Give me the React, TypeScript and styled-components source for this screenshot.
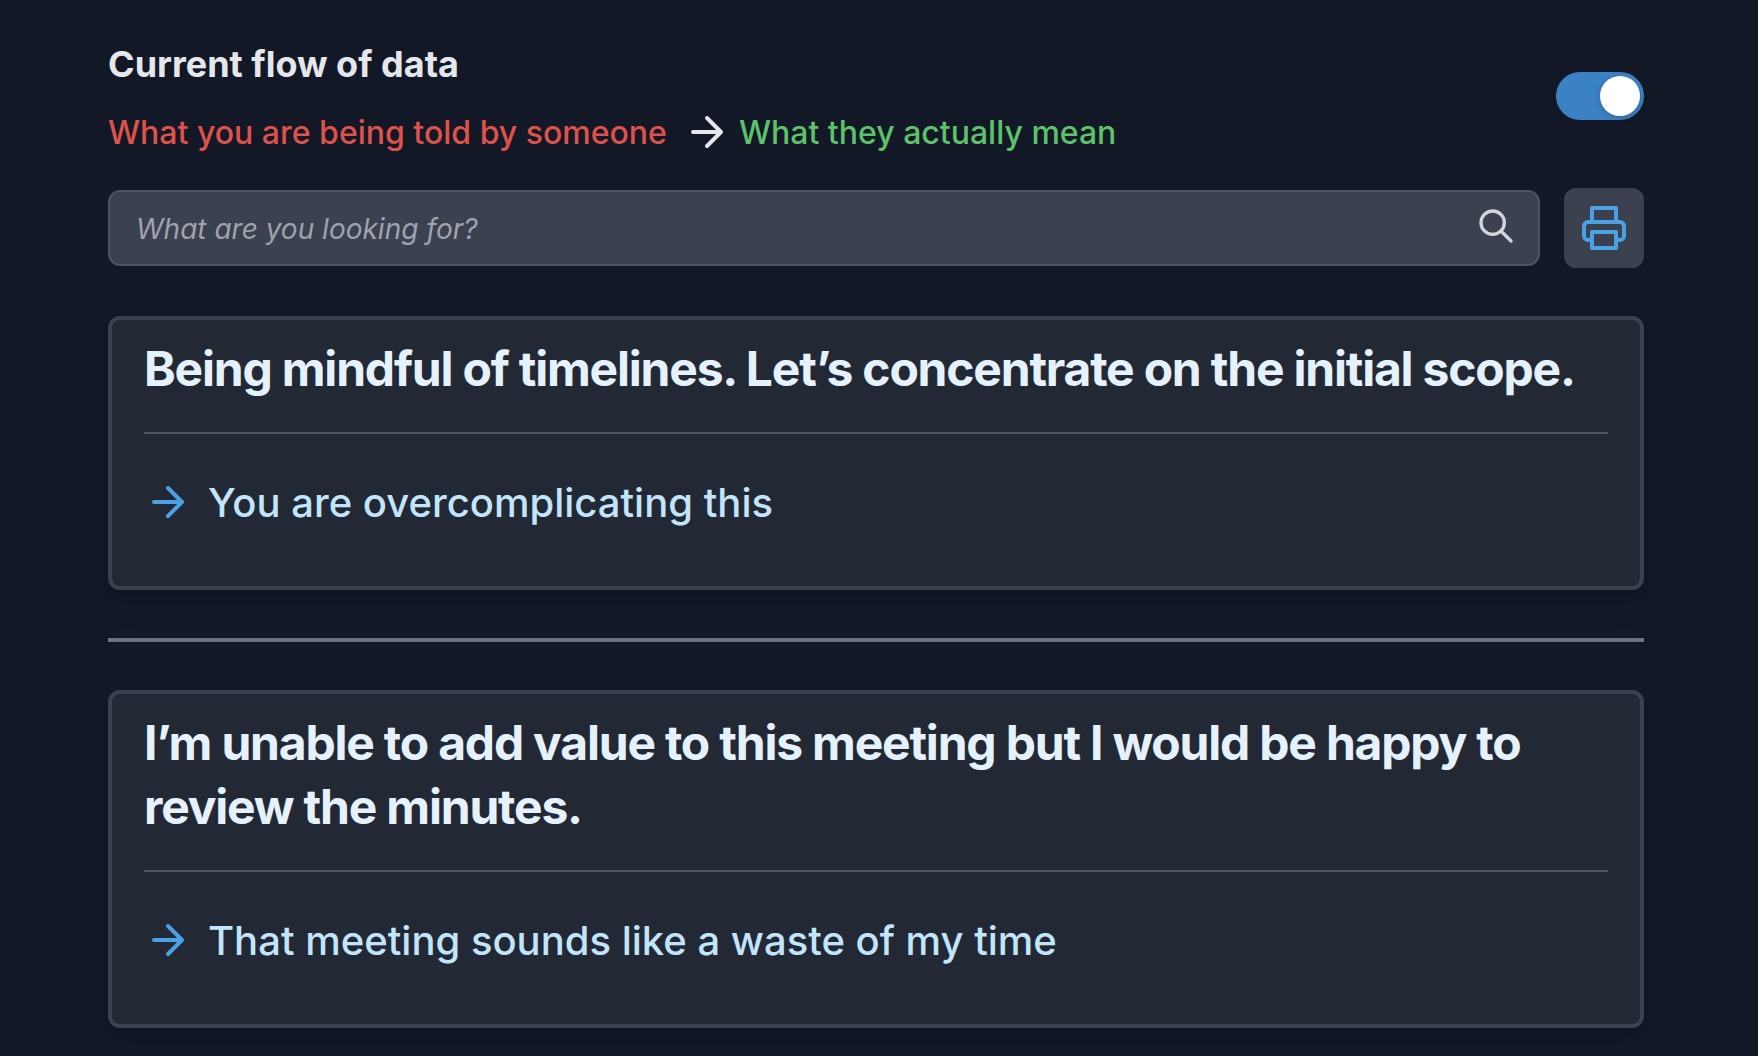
import React, { useState } from "react";
import styled, { createGlobalStyle } from "styled-components";

const GlobalStyle = createGlobalStyle`
  *, *::before, *::after { box-sizing: border-box; }
  body {
    margin: 0;
    background: #121826;
    font-family: Inter, "Liberation Sans", sans-serif;
    -webkit-font-smoothing: antialiased;
  }
  h1, h2, p { margin: 0; }
`;

const Page = styled.main`
  padding: 36px 114px 28px 108px;
`;

const Header = styled.header`
  display: flex;
  align-items: center;
  justify-content: space-between;
  margin-bottom: 32px;
`;

const Heading = styled.h1`
  color: #e6e7eb;
  font-size: 36px;
  font-weight: 700;
  line-height: 56px;
  margin-bottom: 16px;
`;

const Flow = styled.p`
  display: flex;
  align-items: center;
  color: #e6e7eb;
  font-size: 32px;
  font-weight: 500;
  line-height: 48px;
`;

const FlowTerm = styled.span<{ $tone: "from" | "to" }>`
  padding-top: 2px;
  color: ${({ $tone }) => ($tone === "from" ? "#df524b" : "#5dc269")};
  margin: ${({ $tone }) => ($tone === "from" ? "0 16px 0 0" : "0 0 0 8px")};
  line-height: 46px;
`;

const Switch = styled.input`
  appearance: none;
  display: flex;
  flex: none;
  width: 88px;
  height: 48px;
  margin: 0;
  padding: 4px;
  border-radius: 24px;
  background: #4b5563;
  cursor: pointer;

  &::before {
    content: "";
    width: 40px;
    height: 40px;
    border-radius: 50%;
    background: #ffffff;
    box-shadow: 0 2px 6px rgba(0, 0, 0, 0.2);
  }
  &:checked {
    background: #3b82c4;
    justify-content: flex-end;
  }
`;

const Toolbar = styled.form`
  display: flex;
  align-items: center;
  gap: 24px;
  margin-bottom: 48px;
`;

const SearchField = styled.label`
  display: flex;
  flex: 1;
  min-width: 0;
  height: 76px;
  padding: 14px 22px 14px 26px;
  border: 2px solid #4c5361;
  border-radius: 12px;
  background: #3b414f;
  color: #d3d5dc;
`;

const SearchInput = styled.input`
  flex: 1;
  min-width: 0;
  height: 46px;
  padding: 0;
  border: 0;
  outline: 0;
  background: transparent;
  color: #e6e7eb;
  font-family: inherit;
  font-size: 28px;

  &::placeholder {
    color: #9ea3ae;
    font-style: italic;
    opacity: 1;
  }
`;

const PrintButton = styled.button`
  display: flex;
  align-items: center;
  justify-content: center;
  width: 80px;
  height: 80px;
  padding: 0;
  border: 0;
  border-radius: 12px;
  background: #3b414f;
  color: #4ba1e5;
  cursor: pointer;
`;

const Card = styled.article`
  padding: 17px 32px 56px;
  border: 4px solid #3b414f;
  border-radius: 12px;
  background: #222935;
  box-shadow: 0 20px 30px -6px rgba(0, 0, 0, 0.1), 0 8px 12px -4px rgba(0, 0, 0, 0.1);
`;

const CardTitle = styled.h2`
  padding-bottom: 31px;
  margin-bottom: 40px;
  border-bottom: 2px solid #4e5463;
  color: #e5f2fe;
  font-size: 48px;
  font-weight: 700;
  line-height: 64px;
  letter-spacing: -0.025em;
`;

const Meaning = styled.p`
  display: flex;
  align-items: center;
  gap: 16px;
  color: #c2e5fc;
  font-size: 40px;
  font-weight: 500;
  line-height: 56px;
`;

const MeaningText = styled.span`
  padding-top: 2px;
  line-height: 54px;
`;

const Divider = styled.hr`
  height: 4px;
  margin: 48px 0;
  border: 0;
  background: #6d727f;
`;

const Icon = styled.svg<{ $size: number; $color?: string }>`
  flex: none;
  width: ${({ $size }) => $size}px;
  height: ${({ $size }) => $size}px;
  color: ${({ $color }) => $color || "inherit"};
  fill: none;
  stroke: currentColor;
  stroke-width: 2;
  stroke-linecap: round;
  stroke-linejoin: round;
`;

const ArrowIcon = ({ color }: { color?: string }) => (
  <Icon $size={48} $color={color} viewBox="0 0 24 24" aria-hidden="true">
    <path d="M5 12h14M12 5l7 7-7 7" />
  </Icon>
);

const SearchIcon = () => (
  <Icon $size={40} viewBox="0 0 24 24" aria-hidden="true">
    <path d="M21 21l-6-6m2-5a7 7 0 1 1-14 0 7 7 0 0 1 14 0z" />
  </Icon>
);

const PrinterIcon = () => (
  <Icon $size={48} viewBox="0 0 24 24" aria-hidden="true">
    <path d="M6 9V2h12v7M6 18H4a2 2 0 0 1-2-2v-5a2 2 0 0 1 2-2h16a2 2 0 0 1 2 2v5a2 2 0 0 1-2 2h-2" />
    <path d="M6 14h12v8H6z" />
  </Icon>
);

const phrases = [
  {
    said: "Being mindful of timelines. Let’s concentrate on the initial scope.",
    meant: "You are overcomplicating this",
  },
  {
    said: "I’m unable to add value to this meeting but I would be happy to review the minutes.",
    meant: "That meeting sounds like a waste of my time",
  },
];

export default function App() {
  const [forward, setForward] = useState(true);
  const [query, setQuery] = useState("");

  return (
    <>
      <GlobalStyle />
      <Page>
        <Header>
          <div>
            <Heading>Current flow of data</Heading>
            <Flow>
              <FlowTerm $tone="from">What you are being told by someone</FlowTerm>
              <ArrowIcon />
              <FlowTerm $tone="to">What they actually mean</FlowTerm>
            </Flow>
          </div>
          <Switch
            type="checkbox"
            role="switch"
            aria-label="Flow of data"
            checked={forward}
            onChange={(e) => setForward(e.target.checked)}
          />
        </Header>

        <Toolbar role="search" onSubmit={(e) => e.preventDefault()}>
          <SearchField>
            <SearchInput
              type="text"
              aria-label="Search phrases"
              placeholder="What are you looking for?"
              value={query}
              onChange={(e) => setQuery(e.target.value)}
            />
            <SearchIcon />
          </SearchField>
          <PrintButton type="button" aria-label="Print" onClick={() => window.print()}>
            <PrinterIcon />
          </PrintButton>
        </Toolbar>

        {phrases.map((phrase, i) => (
          <React.Fragment key={phrase.said}>
            {i > 0 && <Divider />}
            <Card>
              <CardTitle>{phrase.said}</CardTitle>
              <Meaning>
                <ArrowIcon color="#4ba1e5" />
                <MeaningText>{phrase.meant}</MeaningText>
              </Meaning>
            </Card>
          </React.Fragment>
        ))}
      </Page>
    </>
  );
}
